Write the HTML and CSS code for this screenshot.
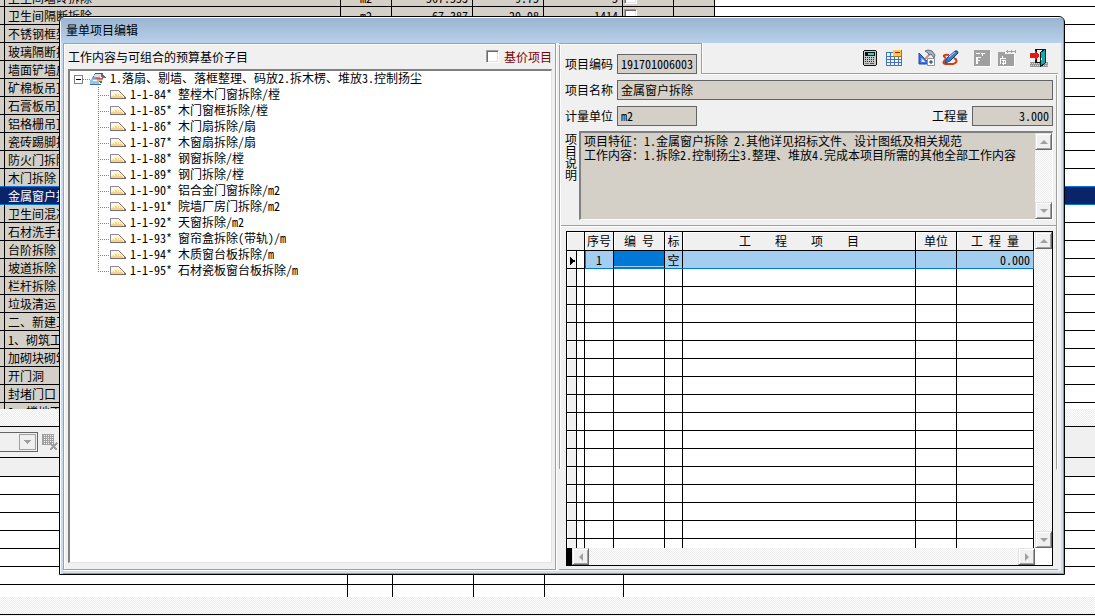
FILE: index.html
```html
<!DOCTYPE html>
<html lang="zh-CN">
<head>
<meta charset="utf-8">
<title>量单项目编辑</title>
<link rel="stylesheet" href="styles.css">
</head>
<body>
<svg class="defs" aria-hidden="true">
  <symbol id="leaf" viewBox="0 0 16 10" shape-rendering="crispEdges">
    <path d="M0 0h9v1h-9zM0 0h1v8h-1z" fill="#8c8c98"/><path d="M1 1h8v1h1v1h1v1h1v1h1v1h1v2h-13z" fill="#fff6dc"/>
    <path d="M1 6h12v2h-12zM3 5h1v1h-1zM5 4h2v2h-2zM8 4h1v2h-1zM10 5h1v1h-1z" fill="#f2d48a"/>
    <path d="M9 1h1v1h-1zM10 2h1v1h-1zM11 3h1v1h-1zM12 4h1v1h-1zM13 5h1v1h-1zM14 6h1v1h-1zM0 8h16v1h-16zM14 7h2v1h-2z" fill="#7a6a66"/>
  </symbol>
  <symbol id="book" viewBox="0 0 16 12" shape-rendering="crispEdges">
    <path d="M5 0h8v1h-8zM4 1h1v2h-1zM3 3h1v1h-1z" fill="#555"/><path d="M5 1h7l-1 3h-7z" fill="#d8e4e4"/>
    <path d="M11 1h2v1h1v1h1v1h1v1h-4v-1h-1z" fill="#6d6a78"/><path d="M2 4h8v1h3v2h-8v1h-3z" fill="#8f98b4"/>
    <path d="M6 5h7v1h-7z" fill="#c65a6a"/><path d="M8 7h4v1h-4z" fill="#eec35b"/>
    <path d="M1 6h5l3 3v3h-9v-3z" fill="#8ccbe8"/><path d="M3 7h4v1h-4z" fill="#fff"/><path d="M0 11h11v1h-11zM9 8h3v1h-3zM10 9h2v1h-2z" fill="#4467ae"/>
  </symbol>
</svg>

<main class="desktop">
  <div class="items">
    <table class="items-table">
      <colgroup><col class="w5"><col class="w336"><col class="w51"><col class="w81"><col class="w71"><col class="w79"><col class="w51"><col class="w41"><col></colgroup>
      <tr><td><td>卫生间墙砖拆除<td class="c">m2<td class="r">567.553<td class="r">9.75<td class="r">5<td><input type="checkbox" aria-label="选择卫生间墙砖拆除"><td><td>
      <tr><td><td>卫生间隔断拆除<td class="c">m2<td class="r">67.387<td class="r">20.98<td class="r">1414<td><input type="checkbox" aria-label="选择卫生间隔断拆除"><td><td>
      <tr><td><td>不锈钢框架拆除<td><td><td><td><td><td><td>
      <tr><td><td>玻璃隔断拆除<td><td><td><td><td><td><td>
      <tr><td><td>墙面铲墙皮<td><td><td><td><td><td><td>
      <tr><td><td>矿棉板吊顶<td><td><td><td><td><td><td>
      <tr><td><td>石膏板吊顶<td><td><td><td><td><td><td>
      <tr><td><td>铝格栅吊顶<td><td><td><td><td><td><td>
      <tr><td><td>瓷砖踢脚拆除<td><td><td><td><td><td><td>
      <tr><td><td>防火门拆除<td><td><td><td><td><td><td>
      <tr class="before-current"><td><td>木门拆除<td><td><td><td><td><td><td>
      <tr class="current"><td><td>金属窗户拆除<td><td><td><td><td><td><td>
      <tr><td><td>卫生间混凝土<td><td><td><td><td><td><td>
      <tr><td><td>石材洗手台<td><td><td><td><td><td><td>
      <tr><td><td>台阶拆除<td><td><td><td><td><td><td>
      <tr><td><td>坡道拆除<td><td><td><td><td><td><td>
      <tr><td><td>栏杆拆除<td><td><td><td><td><td><td>
      <tr><td><td>垃圾清运<td><td><td><td><td><td><td>
      <tr><td><td>二、新建工程<td><td><td><td><td><td><td>
      <tr><td><td>1、砌筑工程<td><td><td><td><td><td><td>
      <tr><td><td>加砌块砌筑<td><td><td><td><td><td><td>
      <tr><td><td>开门洞<td><td><td><td><td><td><td>
      <tr><td><td>封堵门口<td><td><td><td><td><td><td>
      <tr><td><td>2、楼地面<td><td><td><td><td><td><td>
    </table>
  </div>
  <div class="hatch strip"></div>
  <div class="lower-bar">
    <span class="combo"><select disabled aria-label="筛选"></select>
      <svg width="17" height="16" shape-rendering="crispEdges"><path d="M.5 .5h16v15h-16z" fill="#f0f0f0" stroke="#a0a0a0"/><path d="M5 6h7v1h-1v1h-1v1h-1v1h-1v-1h-1v-1h-1v-1h-1z" fill="#a0a0a0"/></svg></span>
    <button class="icon-button" disabled aria-label="清除">
      <svg width="18" height="18" shape-rendering="crispEdges"><path d="M1 1h12v11h-12z" fill="#a0a0a0"/><path d="M3.500 2v9M5.500 2v9M7.500 2v9M9.500 2v9M11.500 2v9" stroke="#f4f4f4" stroke-dasharray="1 1"/><path d="M9 10l7 7M16 10l-7 7" stroke="#a0a0a0" stroke-width="2"/></svg></button>
  </div>
  <div class="lower-head"></div>
  <div class="lower">
    <table class="lower-table">
      <colgroup><col class="w348"><col class="w45"><col class="w81"><col class="w71"><col class="w79"><col></colgroup>
      <tr><td><td><td><td><td><td><tr><td><td><td><td><td><td><tr><td><td><td><td><td><td><tr><td><td><td><td><td><td>
      <tr><td><td><td><td><td><td><tr><td><td><td><td><td><td><tr><td><td><td><td><td><td>
    </table>
  </div>
  <div class="hatch strip"></div>
  <div class="foot"></div>

  <section class="dialog" role="dialog" aria-labelledby="title">
    <h1 class="title" id="title">量单项目编辑</h1>
    <div class="body">
      <section class="left">
        <div class="left-head">
          <span>工作内容与可组合的预算基价子目</span>
          <span class="check"><input type="checkbox" id="base"><label for="base">基价项目</label></span>
        </div>
        <ul class="tree">
          <li><div class="root"><svg class="box" width="9" height="9" shape-rendering="crispEdges"><path d="M.5 .5h8v8h-8z" fill="#fff" stroke="#808080"/><path d="M2 4h5v1h-5z"/></svg><i></i><svg width="16" height="12"><use href="#book"/></svg><span>1.落扇、剔墙、落框整理、码放2.拆木楞、堆放3.控制扬尘</span></div>
            <ul class="branch">
              <li><svg><use href="#leaf"/></svg><span>1-1-84* 整樘木门窗拆除/樘</span></li>
              <li><svg><use href="#leaf"/></svg><span>1-1-85* 木门窗框拆除/樘</span></li>
              <li><svg><use href="#leaf"/></svg><span>1-1-86* 木门扇拆除/扇</span></li>
              <li><svg><use href="#leaf"/></svg><span>1-1-87* 木窗扇拆除/扇</span></li>
              <li><svg><use href="#leaf"/></svg><span>1-1-88* 钢窗拆除/樘</span></li>
              <li><svg><use href="#leaf"/></svg><span>1-1-89* 钢门拆除/樘</span></li>
              <li><svg><use href="#leaf"/></svg><span>1-1-90* 铝合金门窗拆除/m2</span></li>
              <li><svg><use href="#leaf"/></svg><span>1-1-91* 院墙厂房门拆除/m2</span></li>
              <li><svg><use href="#leaf"/></svg><span>1-1-92* 天窗拆除/m2</span></li>
              <li><svg><use href="#leaf"/></svg><span>1-1-93* 窗帘盒拆除(带轨)/m</span></li>
              <li><svg><use href="#leaf"/></svg><span>1-1-94* 木质窗台板拆除/m</span></li>
              <li><svg><use href="#leaf"/></svg><span>1-1-95* 石材瓷板窗台板拆除/m</span></li>
            </ul>
          </li>
        </ul>
      </section>

      <section class="right">
        <div class="top">
          <div class="code"><label for="code">项目编码</label><input class="field short" id="code" value="191701006003" readonly></div>
          <div class="tools">
            <div class="group">
              <button class="icon-button" aria-label="计算器"><svg width="18" height="18" shape-rendering="crispEdges"><path d="M2 1h12v1h1v14h-1v1h-12v-1h-1v-14h1z" fill="#111"/><path d="M2 2h12v14h-12z" fill="#c8c8c8"/><path d="M3 3h10v4h-10z" fill="#111"/><path d="M6 4h6v2h-6z" fill="#20d8d8"/><path d="M3 8.500h10M3 10.500h10M3 12.500h10" stroke="#222" stroke-dasharray="1 1"/><path d="M3 14h4v1h-4z" fill="#777"/><path d="M8 14h4v1h-4z" fill="#e01818"/></svg></button>
              <button class="icon-button" aria-label="表格"><svg width="18" height="18" shape-rendering="crispEdges"><path d="M0 3h16v14h-16z" fill="#4472b8"/><path d="M1 4h3v3h-3zM5 4h3v3h-3zM9 4h3v3h-3zM1 8h3v2h-3zM5 8h3v2h-3zM9 8h3v2h-3zM13 8h2v2h-2zM1 11h3v2h-3zM5 11h3v2h-3zM9 11h3v2h-3zM13 11h2v2h-2zM1 14h3v2h-3zM5 14h3v2h-3zM9 14h3v2h-3zM13 14h2v2h-2z" fill="#eef5ff"/><path d="M7 1h9v7h-9z" fill="#a07818"/><path d="M7 1h8v6h-8z" fill="#f4cc50"/><path d="M9 3h5v1h-5z" fill="#b01818"/></svg></button>
            </div>
            <div class="group">
              <button class="icon-button" aria-label="组价工具"><svg width="18" height="18"><path d="M1 4v11h11z" fill="#3d73dc" stroke="#1e4aa8"/><path d="M3.500 9v4h4z" fill="#f0f0f0"/><path d="M7 10l6-6" stroke="#c79a66" stroke-width="2"/><path d="M7 2l3-1 4 1 3 4-1 3-3-4-2 1-1-2z" fill="#a6b2be" stroke="#5d6f80"/><path d="M9.500 9.500h7v7h-7z" fill="#fff" stroke="#8294a8"/><path d="M11 13h4M13 11v4" stroke="#1c2c50"/></svg></button>
              <button class="icon-button" aria-label="编辑"><svg width="18" height="18"><path d="M7 6c-5-1-7 1-3 3M4 10c-4 3-3 5 1 5h6c4-1 5-4 1-6" fill="none" stroke="#cf3e16" stroke-width="2"/><path d="M3 14l2-5 8-7q3-1 3 2l-8 8z" fill="#3c7ed2" stroke="#183f86"/><path d="M7 8l6-5" stroke="#b9dcff"/></svg></button>
            </div>
            <div class="group">
              <button class="icon-button" disabled aria-label="替换"><svg width="18" height="18" shape-rendering="crispEdges"><path d="M1 2h16v16h-16z" fill="#fff"/><path d="M0 1h16v16h-16z" fill="#a0a0a0"/><path d="M2 4h4v1h-4zM7 4h4v1h-4zM8 5h1v2h-1zM2 8h5v1h-5zM2 8h2v7h-2zM4 11h2v1h-2z" fill="#fff"/></svg></button>
              <button class="icon-button" disabled aria-label="汇总"><svg width="18" height="18" shape-rendering="crispEdges"><path d="M1 4h7v2h9v12h-16z" fill="#fff"/><path d="M0 3h7v2h9v12h-16z" fill="#a0a0a0"/><path d="M8 2.500h10M9.500 1v3M13.500 1v3M17.500 1v3" stroke="#a0a0a0"/><path d="M2 9.500h6M4.500 7v3M2.500 9v6M4 11.500h4M4 14.500h4M5.500 11v5M7.500 11v4" stroke="#fff" fill="none"/></svg></button>
            </div>
            <button class="icon-button" aria-label="退出"><svg width="18" height="18" shape-rendering="crispEdges"><path d="M0 13h18v5h-18z" fill="#999"/><path d="M0 14.500h18M1 16.500h17" stroke="#d6d6d6" stroke-dasharray="1 1"/><path d="M5 0h11v14h-11z" fill="#111"/><path d="M7 1h5v12h-5z" fill="#f0f0f0"/><path d="M10 4l5-4v14l-5 4z" fill="#18a8a8" stroke="#022"/><path d="M11 9h1v2h-1z" fill="#fff"/><path d="M0 4h5v-2l4 4v1l-4 4v-2h-5z" fill="#e81818"/></svg></button>
          </div>
        </div>
        <div class="row"><label for="name">项目名称</label><input class="field grow" id="name" value="金属窗户拆除" readonly></div>
        <div class="row"><label for="unit">计量单位</label><input class="field short" id="unit" value="m2" readonly><label class="amount" for="qty">工程量</label><input class="field qty" id="qty" value="3.000" readonly></div>
        <div class="row memo-row"><label class="vertical" for="memo">项目说明</label>
          <div class="memo"><textarea id="memo" readonly>项目特征：1.金属窗户拆除 2.其他详见招标文件、设计图纸及相关规范
工作内容：1.拆除2.控制扬尘3.整理、堆放4.完成本项目所需的其他全部工作内容</textarea>
            <div class="scroll hatch"><button class="up" aria-label="向上"></button><button class="down" aria-label="向下"></button></div></div>
        </div>
        <hr>
        <div class="grid">
          <div class="grid-main">
            <div class="grid-view">
              <table class="grid-table">
                <colgroup><col class="w10"><col class="w8"><col class="w29"><col class="w51"><col class="w18"><col><col class="w41"><col class="w77"></colgroup>
                <thead><tr><th colspan="2"></th><th>序号</th><th>编 号</th><th>标</th><th>工　　程　　项　　目</th><th>单位</th><th>工 程 量</th></tr></thead>
                <tbody>
                  <tr class="active"><td><svg width="6" height="8" shape-rendering="crispEdges"><path d="M0 0h1v1h1v1h1v1h2v2h-2v1h-1v1h-1v1h-1z"/></svg><td><td>1<td class="cell"><td>空<td><td><td class="r">0.000
                  <tr><td><td><td><td><td><td><td><td><tr><td><td><td><td><td><td><td><td><tr><td><td><td><td><td><td><td><td>
                  <tr><td><td><td><td><td><td><td><td><tr><td><td><td><td><td><td><td><td><tr><td><td><td><td><td><td><td><td>
                  <tr><td><td><td><td><td><td><td><td><tr><td><td><td><td><td><td><td><td><tr><td><td><td><td><td><td><td><td>
                  <tr><td><td><td><td><td><td><td><td><tr><td><td><td><td><td><td><td><td><tr><td><td><td><td><td><td><td><td>
                  <tr><td><td><td><td><td><td><td><td><tr><td><td><td><td><td><td><td><td><tr><td><td><td><td><td><td><td><td>
                  <tr><td><td><td><td><td><td><td><td>
                </tbody>
              </table>
            </div>
            <div class="scroll hatch"><button class="up" aria-label="向上滚动"></button><button class="down" aria-label="向下滚动"></button></div>
          </div>
          <div class="grid-foot"><span class="split"></span><div class="hscroll hatch"><button class="prev" aria-label="向左滚动"></button><button class="next" aria-label="向右滚动"></button></div></div>
        </div>
      </section>
    </div>
  </section>
</main>
</body>
</html>
```
FILE: styles.css
```css
* { box-sizing: border-box; }
body, input, textarea, button, select {
  font: 12px/16px "Noto Sans Mono CJK SC", "Noto Sans CJK SC", sans-serif;
  color: #000;
}
body { margin: 0; background: #fff; }
button, input, textarea { margin: 0; padding: 0; border-radius: 0; }
ul { list-style: none; margin: 0; padding: 0; }
svg { display: block; flex: none; }
table { width: 100%; table-layout: fixed; border-collapse: separate; border-spacing: 0; }
td, th {
  height: 18px; padding: 0; font-weight: normal; line-height: 17px;
  white-space: nowrap; overflow: hidden;
  border-right: 1px solid #000; border-bottom: 1px solid #000;
}
.defs { position: absolute; width: 0; height: 0; }
.w5 { width: 5px; } .w8 { width: 8px; } .w10 { width: 10px; } .w18 { width: 18px; }
.w29 { width: 29px; } .w41 { width: 41px; } .w45 { width: 45px; } .w51 { width: 51px; }
.w71 { width: 71px; } .w77 { width: 77px; } .w79 { width: 79px; } .w81 { width: 81px; }
.w336 { width: 336px; } .w348 { width: 348px; }
.hatch { background: repeating-conic-gradient(#fff 0 25%, #ececec 0 50%) 0 0 / 2px 2px; }
input[type="checkbox"] {
  appearance: none; width: 13px; height: 13px; background: #fff;
  border: 1px solid; border-color: #a0a0a0 #fff #fff #a0a0a0;
  box-shadow: inset 1px 1px #696969, inset -1px -1px #e3e3e3;
}

/* desktop */
.desktop { position: relative; display: flex; flex-direction: column; height: 100vh; min-height: 560px; overflow: hidden; }
.desktop > div { flex: none; }
.desktop > .items { flex: 1; min-height: 0; overflow: hidden; }
.items-table { margin-top: -11px; }
.items-table td { background: #d4d0c8; }
.items-table td:nth-child(2) { padding-left: 3px; }
.items-table td:last-child { background: #fff; border-right: 0; }
.items-table .c { text-align: center; }
.items-table .r { text-align: right; padding-right: 4px; }
.items-table input { display: block; margin-left: 1px; }
.items-table .current td { background: #0a246a; color: #fff; border-bottom-color: #0078d7; border-right-color: #0a246a; }
.items-table .before-current td { border-bottom-color: #0078d7; }
.strip { height: 17px; }
.lower-bar { display: flex; align-items: center; gap: 3px; height: 32px; background: #f0f0f0; border: solid #000; border-width: 1px 0; }
.combo { position: relative; width: 38px; }
.combo select { display: block; width: 100%; height: 20px; appearance: none; border: 1px solid #646464; border-left: 0; border-radius: 0; background: #f0f0f0; opacity: 1; }
.combo svg { position: absolute; right: 2px; top: 2px; }
.lower-head { height: 19px; background: #f0f0f0; border-bottom: 1px solid #000; }
.lower { height: 120px; overflow: hidden; }
.lower-table td:last-child { border-right: 0; }
.foot { height: 2px; background: #f0f0f0; border-top: 1px solid #000; }

/* dialog window */
.dialog {
  position: absolute; inset: 16px 30px 41px 59px;
  display: flex; flex-direction: column;
  border: 1px solid #000; border-radius: 6px 6px 0 0;
  background: #f0f0f0; overflow: hidden;
  box-shadow: inset 1px 1px #fff, inset 3px 0 #c8dcf0, inset -1px -1px #46b4dc, inset -3px -3px #d0deee;
}
.title {
  flex: none; margin: 1px 1px 0; padding-left: 5px; height: 25px;
  font-size: 12px; font-weight: normal; line-height: 24px;
  background: linear-gradient(#99b4d1, #b9d1ea);
}
.body {
  flex: 1; min-height: 0; display: grid; gap: 3px; padding: 0 3px 4px;
  grid-template: minmax(0, 1fr) / 493fr 502fr;
}
.left {
  display: flex; flex-direction: column; min-width: 0; padding: 0 3px 6px 4px;
  border: 1px solid #a0a0a0; box-shadow: inset 1px 1px #fff, 1px 1px #fff;
}
.left-head { display: flex; justify-content: space-between; align-items: center; height: 25px; }
.check { display: flex; align-items: center; gap: 5px; color: #800000; }
.tree {
  flex: 1; min-height: 0; background: #fff;
  border: solid; border-width: 2px 1px 1px 2px; border-color: #808080 #e3e3e3 #e3e3e3 #808080;
}
.tree span { padding-bottom: 2px; line-height: 14px; white-space: nowrap; }
.root { display: flex; align-items: center; height: 16px; padding-left: 4px; }
.root i { width: 7px; height: 1px; background: repeating-linear-gradient(90deg, #808080 0 1px, #fff 1px 2px); }
.root span { padding-left: 4px; }
.branch { margin-left: 28px; }
.branch li {
  display: flex; align-items: center; height: 16px;
  background: repeating-linear-gradient(#808080 0 1px, #fff 1px 2px) 0 0 / 1px 16px no-repeat;
}
.branch li:last-child { background-size: 1px 8px; }
.branch li::before { content: ""; width: 12px; height: 1px; background: repeating-linear-gradient(90deg, #808080 0 1px, #fff 1px 2px); }
.branch svg { width: 16px; height: 10px; margin-right: 4px; }

/* item form */
.right {
  display: flex; flex-direction: column; min-width: 0; margin-right: 3px; padding-bottom: 3px;
  border-bottom: 1px solid #a0a0a0;
  background:
    linear-gradient(90deg, #a0a0a0 1px, #fff 1px) 0 0 / 2px 81% no-repeat,
    linear-gradient(90deg, #a0a0a0 1px, #fff 1px) 100% 32px / 2px 75% no-repeat;
}
.top { display: flex; align-items: flex-start; }
.code { display: flex; align-items: center; padding: 10px 4px 0 6px; border-top: 1px solid #a0a0a0; box-shadow: inset 0 1px #fff; }
.right label { flex: none; width: 52px; }
.tools {
  flex: 1; display: flex; justify-content: flex-end; align-items: flex-start; gap: 14px;
  height: 31px; padding: 6px 10px 0 0;
  border: solid #a0a0a0; border-width: 0 0 1px 1px; box-shadow: 0 1px #fff, inset 1px 0 #fff;
}
.group { display: flex; gap: 6px; }
.icon-button { width: 18px; height: 18px; border: 0; background: none; }
.field { min-width: 0; height: 20px; padding: 0 3px 2px; background: #d4d0c8; border: 1px solid #646464; }
.short { width: 80px; }
.grow { flex: 1; }
.qty { width: 81px; text-align: right; }
.row { display: flex; align-items: center; padding: 6px 5px 0 6px; }
.right .amount { width: 40px; margin-left: auto; }
.memo-row { align-items: flex-start; padding-top: 5px; }
.right .vertical { width: 12px; margin-right: 2px; padding-top: 2px; line-height: 12px; word-break: break-all; }
.memo {
  flex: 1; display: flex; height: 89px; background: #d4d0c8;
  border: solid; border-width: 2px 1px 1px 2px; border-color: #808080 #fff #fff #808080;
}
.memo textarea { flex: 1; min-width: 0; border: 0; padding: 1px 3px; background: none; resize: none; overflow: hidden; line-height: 14px; }
hr { width: calc(100% - 4px); height: 2px; margin: 5px 2px 4px; border: solid; border-width: 1px 0; border-color: #a0a0a0 transparent #fff; flex: none; }

/* scroll bars */
.scroll { display: flex; flex-direction: column; justify-content: space-between; width: 17px; }
.scroll button, .hscroll button {
  display: grid; place-items: center; width: 17px; height: 17px; background: #f0f0f0;
  border: 1px solid; border-color: #e3e3e3 #696969 #696969 #e3e3e3;
  box-shadow: inset 1px 1px #fff, inset -1px -1px #a0a0a0;
}
.scroll button::before, .hscroll button::before { content: ""; border: 4px solid transparent; }
.scroll .up::before { border-top: 0; border-bottom-color: #a0a0a0; }
.scroll .down::before { border-bottom: 0; border-top-color: #a0a0a0; }
.hscroll .prev::before { border-left: 0; border-right-color: #a0a0a0; }
.hscroll .next::before { border-right: 0; border-left-color: #a0a0a0; }
.hscroll { flex: 1; display: flex; justify-content: space-between; }

/* quota grid */
.grid { flex: 1; min-height: 0; display: flex; flex-direction: column; margin: 0 5px 0 7px; border: 1px solid #000; background: #fff; }
.grid-main { flex: 1; min-height: 0; display: flex; gap: 1px; }
.grid-view { flex: 1; min-width: 0; overflow: hidden; }
.grid-foot { flex: none; display: flex; padding-right: 17px; }
.split { width: 5px; background: #000; }
.grid-table th { height: 19px; line-height: 18px; background: #f0f0f0; box-shadow: inset 1px 1px #fff; }
.grid-table td { text-align: center; }
.grid-table td:first-child { background: #f0f0f0; box-shadow: inset 1px 1px #fff; }
.grid-table td svg { margin: 2px 0 0 3px; }
.grid-table .active td:nth-child(n+3) { background: #a4cef0; border-bottom-color: #0078d7; }
.grid-table .active td:nth-child(3) { box-shadow: inset 1px 0 #0078d7; }
.grid-table .active td:last-child { border-right-color: #0078d7; }
.grid-table .active .cell:nth-child(n) { background: #0078d7; box-shadow: inset 0 -1px #0078d7, inset 0 -2px #a4cef0; }
.grid-table .active .r { text-align: right; padding-right: 3px; }
```
